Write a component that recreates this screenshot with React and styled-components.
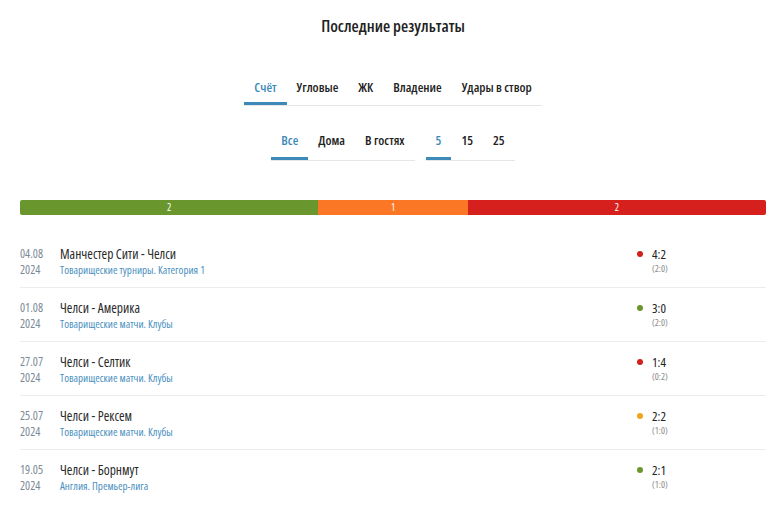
import React from "react";
import styled, { createGlobalStyle } from "styled-components";

const Global = createGlobalStyle`
  body {
    margin: 0;
    background: #fff;
    font-family: "Open Sans", "DejaVu Sans", sans-serif;
    font-stretch: 75%;
    color: #222;
  }
`;

const Page = styled.div`
  width: 782px;
  padding: 0 16px 0 20px;
  box-sizing: border-box;
`;

const Title = styled.h2`
  margin: 0;
  padding-top: 16px;
  text-align: center;
  font-size: 16.5px;
  font-weight: 600;
  color: #222;
  height: 24px;
  line-height: 20px;
`;

const TabsRow = styled.div`
  display: flex;
  justify-content: center;
  gap: 11px;
  margin-top: ${(p) => p.$top}px;
`;

const Tabs = styled.div`
  display: flex;
  border-bottom: 1px solid #e6e6e6;
`;

const Tab = styled.div`
  padding: 0 10px;
  height: ${(p) => p.$h}px;
  line-height: 32px;
  font-size: 13px;
  font-weight: 600;
  color: ${(p) => (p.$active ? "#3d8ab8" : "#222")};
  box-shadow: ${(p) => (p.$active ? "inset 0 -3px 0 #3d8ab8" : "none")};
  white-space: nowrap;
`;

const Bar = styled.div`
  display: flex;
  height: 15px;
  margin-top: 39px;
  border-radius: 2px;
  overflow: hidden;
`;

const Segment = styled.div`
  flex: ${(p) => p.$n};
  background: ${(p) => p.$color};
  color: #fff;
  font-size: 10px;
  line-height: 15px;
  text-align: center;
`;

const List = styled.div`
  margin-top: 19px;
`;

const Row = styled.div`
  display: grid;
  grid-template-columns: 40px 1fr 129px;
  padding: 12px 0 9px;
  height: 32px;
  border-bottom: 1px solid #ececec;
  &:last-child {
    border-bottom: none;
  }
`;

const DateCol = styled.div`
  font-size: 12px;
  line-height: 16px;
  color: #7b8a98;
`;

const Match = styled.div`
  display: flex;
  flex-direction: column;
`;

const Teams = styled.div`
  font-size: 13.5px;
  line-height: 16px;
  color: #2a2a2a;
`;

const League = styled.div`
  font-size: 11px;
  line-height: 16px;
  color: #4a90bf;
`;

const Score = styled.div`
  display: grid;
  grid-template-columns: 15px auto;
  align-content: start;
`;

const Dot = styled.span`
  width: 6px;
  height: 6px;
  border-radius: 50%;
  background: ${(p) => p.$color};
  margin-top: 5px;
`;

const Main = styled.div`
  font-size: 13px;
  line-height: 16px;
  color: #222;
`;

const Half = styled.div`
  grid-column: 2;
  font-size: 9.5px;
  line-height: 14px;
  color: #888;
`;

const colors = { w: "#6a972d", d: "#f0a418", l: "#d0221f" };

const matches = [
  { d: "04.08", y: "2024", t: "Манчестер Сити - Челси", l: "Товарищеские турниры. Категория 1", s: "4:2", h: "(2:0)", r: "l" },
  { d: "01.08", y: "2024", t: "Челси - Америка", l: "Товарищеские матчи. Клубы", s: "3:0", h: "(2:0)", r: "w" },
  { d: "27.07", y: "2024", t: "Челси - Селтик", l: "Товарищеские матчи. Клубы", s: "1:4", h: "(0:2)", r: "l" },
  { d: "25.07", y: "2024", t: "Челси - Рексем", l: "Товарищеские матчи. Клубы", s: "2:2", h: "(1:0)", r: "d" },
  { d: "19.05", y: "2024", t: "Челси - Борнмут", l: "Англия. Премьер-лига", s: "2:1", h: "(1:0)", r: "w" },
];

export default function App() {
  return (
    <Page>
      <Global />
      <Title>Последние результаты</Title>
      <TabsRow $top={31}>
        <Tabs>
          <Tab $h={34} $active>Счёт</Tab>
          <Tab $h={34}>Угловые</Tab>
          <Tab $h={34}>ЖК</Tab>
          <Tab $h={34}>Владение</Tab>
          <Tab $h={34}>Удары в створ</Tab>
        </Tabs>
      </TabsRow>
      <TabsRow $top={18}>
        <Tabs>
          <Tab $h={36} $active>Все</Tab>
          <Tab $h={36}>Дома</Tab>
          <Tab $h={36}>В гостях</Tab>
        </Tabs>
        <Tabs>
          <Tab $h={36} $active>5</Tab>
          <Tab $h={36}>15</Tab>
          <Tab $h={36}>25</Tab>
        </Tabs>
      </TabsRow>
      <Bar>
        <Segment $n={2} $color="#6a972d">2</Segment>
        <Segment $n={1} $color="#fb7625">1</Segment>
        <Segment $n={2} $color="#d5201e">2</Segment>
      </Bar>
      <List>
        {matches.map((m) => (
          <Row key={m.d}>
            <DateCol>
              {m.d}
              <br />
              {m.y}
            </DateCol>
            <Match>
              <Teams>{m.t}</Teams>
              <League>{m.l}</League>
            </Match>
            <Score>
              <Dot $color={colors[m.r]} />
              <Main>{m.s}</Main>
              <Half>{m.h}</Half>
            </Score>
          </Row>
        ))}
      </List>
    </Page>
  );
}
